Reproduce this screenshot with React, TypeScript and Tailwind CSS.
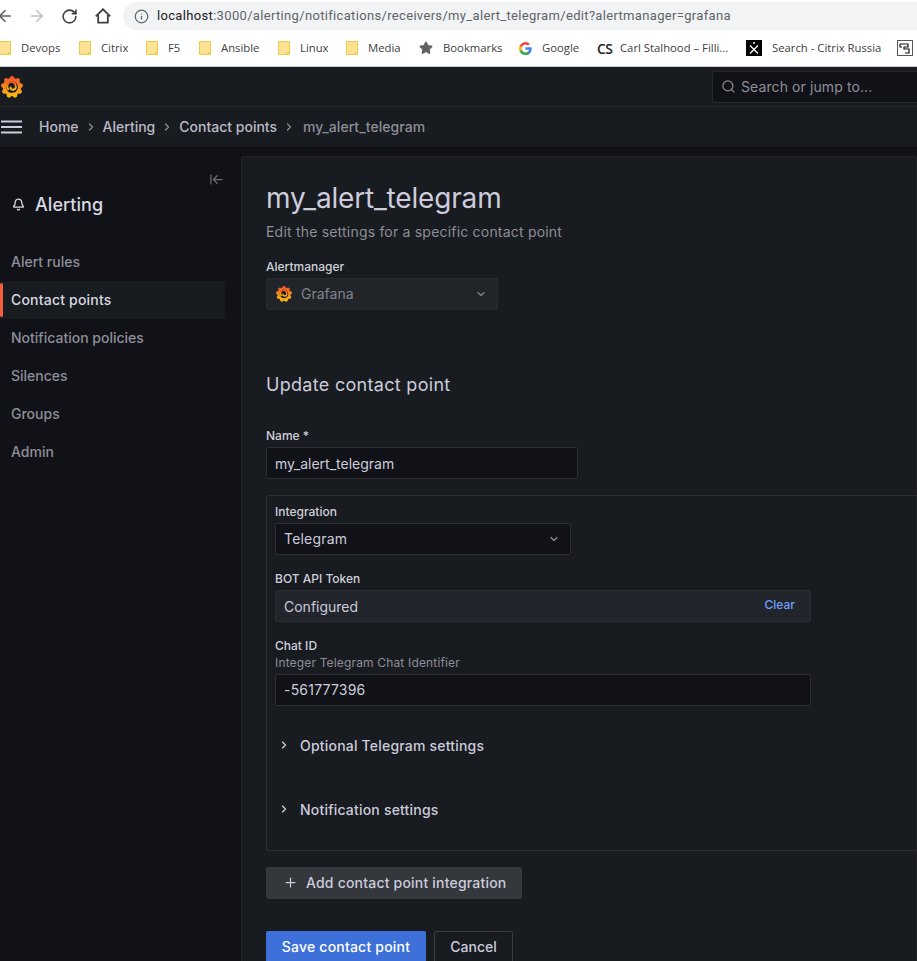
import React from 'react';
import { ArrowLeft, ArrowRight, ArrowLeftToLine, Bell, ChevronDown, ChevronRight, Info, Plus, RotateCw, Search, Star } from 'lucide-react';

const GrafanaLogo: React.FC<{ size: number; id: string }> = ({ size, id }) => {
  const pts: string[] = [];
  const teeth = 9;
  for (let i = 0; i < teeth; i++) {
    const a = (i / teeth) * Math.PI * 2 - Math.PI / 2;
    const step = (Math.PI * 2) / teeth;
    [[9.6, -0.5], [12, -0.14], [12, 0.14], [9.6, 0.5]].forEach(([r, k]) => {
      const t = a + k * step;
      pts.push(`${(12 + r * Math.cos(t)).toFixed(2)},${(12 + r * Math.sin(t)).toFixed(2)}`);
    });
  }
  return (
    <svg width={size} height={size} viewBox="0 0 24 24" className="shrink-0">
      <defs>
        <linearGradient id={id} x1="0" y1="1" x2="0" y2="0">
          <stop offset="0" stopColor="#fcc30f" />
          <stop offset="1" stopColor="#ee4f2a" />
        </linearGradient>
      </defs>
      <polygon points={pts.join(' ')} fill={`url(#${id})`} />
      <circle cx="12" cy="12" r="6.4" fill="#181b1f" />
      <path d="M7.800 14.300a4.800 4.800 0 1 1 8.400-2.300c-.2 2.200-2 3.200-3.600 3-1.500-.2-2.300-1.400-2.200-2.500" fill="none" stroke={`url(#${id})`} strokeWidth="2.300" strokeLinecap="round" />
    </svg>
  );
};

const Folder: React.FC = () => (
  <svg width="12" height="14" viewBox="0 0 12 14" className="shrink-0">
    <path d="M.5.500h11v13H.5z" fill="#fde293" stroke="#f2c94c" />
    <path d="M9 13.500v-2h2.500" fill="none" stroke="#f2c94c" />
  </svg>
);

const GoogleIcon: React.FC = () => (
  <svg width="13" height="13" viewBox="0 0 24 24" className="shrink-0">
    <path fill="#4285F4" d="M23.500 12.300c0-.9-.1-1.700-.2-2.500H12v4.700h6.500a5.600 5.600 0 0 1-2.400 3.600v3h3.900c2.200-2.100 3.500-5.100 3.500-8.800z" />
    <path fill="#34A853" d="M12 24c3.200 0 6-1.100 8-2.900l-3.900-3c-1.100.7-2.500 1.200-4.100 1.200-3.100 0-5.800-2.100-6.700-5H1.300v3.100A12 12 0 0 0 12 24z" />
    <path fill="#FBBC05" d="M5.300 14.300a7.200 7.200 0 0 1 0-4.600V6.600h-4a12 12 0 0 0 0 10.800z" />
    <path fill="#EA4335" d="M12 4.800c1.800 0 3.300.6 4.600 1.800L20 3.200A12 12 0 0 0 1.300 6.600l4 3.100c.9-2.800 3.600-4.900 6.700-4.900z" />
  </svg>
);

const XIcon: React.FC = () => (
  <svg width="16" height="16" viewBox="0 0 16 16" className="shrink-0">
    <rect width="16" height="16" fill="#000" />
    <circle cx="8" cy="3" r="1" fill="#fff" />
    <path d="M4 5.500l8 8M12 5.500l-8 8" stroke="#fff" strokeWidth="1.300" />
  </svg>
);

const QrIcon: React.FC = () => (
  <svg width="16" height="16" viewBox="0 0 16 16" className="shrink-0">
    <rect x=".5" y=".5" width="15" height="15" fill="#fff" stroke="#555" />
    <path d="M3 4h8v3H7v2h5v4H8M3 4v3h2" fill="none" stroke="#111" strokeWidth="1.200" />
  </svg>
);

const HomeIcon: React.FC = () => (
  <svg width="16" height="16" viewBox="0 0 16 16" className="ml-[17px] shrink-0 text-[#3c4043]">
    <path d="M.8 8.300L8 1.300l7.200 7M3.200 7v7.700h9.600V7" fill="none" stroke="currentColor" strokeWidth="1.800" />
  </svg>
);

const bookmarks: { icon: React.ReactNode; label: string; w: string }[] = [
  { icon: <Folder />, label: 'Devops', w: 'w-[80px]' },
  { icon: <Folder />, label: 'Citrix', w: 'w-[67px]' },
  { icon: <Folder />, label: 'F5', w: 'w-[53px]' },
  { icon: <Folder />, label: 'Ansible', w: 'w-[79px]' },
  { icon: <Folder />, label: 'Linux', w: 'w-[68px]' },
  { icon: <Folder />, label: 'Media', w: 'w-[73px]' },
  { icon: <Star size={14} fill="#5f6368" stroke="#5f6368" className="shrink-0" />, label: 'Bookmarks', w: 'w-[100px]' },
  { icon: <GoogleIcon />, label: 'Google', w: 'w-[78px]' },
  { icon: <span className="text-[14px] font-semibold text-[#222] w-[13px] shrink-0 tracking-[-0.5px]">CS</span>, label: 'Carl Stalhood – Filli...', w: 'w-[149px]' },
  { icon: <XIcon />, label: 'Search - Citrix Russia', w: 'w-[151px]' },
];

const ChromeBar: React.FC = () => (
  <div className="h-[67px] bg-white border-b border-[#d0d0d0] overflow-hidden font-['Open_Sans',sans-serif]">
    <div className="h-[34px] flex items-start pt-[2px]">
      <div className="w-[123px] h-[28px] flex items-center shrink-0 text-[#5f6368]">
        <ArrowLeft size={18} strokeWidth={2.3} className="-ml-[4px] shrink-0" />
        <ArrowRight size={18} strokeWidth={2.3} className="ml-[14px] text-[#bdc1c6] shrink-0" />
        <RotateCw size={17} strokeWidth={2.3} className="ml-[15px] shrink-0 text-[#3c4043]" />
        <HomeIcon />
      </div>
      <div className="flex-1 h-[28px] bg-[#f1f3f4] rounded-l-[14px] flex items-center pl-[11px] text-[13px] text-[#5f6368] whitespace-nowrap font-['Roboto',sans-serif] tracking-[0.33px]">
        <Info size={15} className="mr-[8px] shrink-0" />
        <span className="text-[#202124]">localhost</span>:3000/alerting/notifications/receivers/my_alert_telegram/edit?alertmanager=grafana
      </div>
    </div>
    <div className="h-[28px] flex items-center -ml-[1px] text-[11.300px] text-[#3c4043] whitespace-nowrap">
      {bookmarks.map(b => (
        <div key={b.label} className={`flex items-center gap-[10px] shrink-0 ${b.w}`}>
          {b.icon}
          <span>{b.label}</span>
        </div>
      ))}
      <QrIcon />
    </div>
  </div>
);

const TopNav: React.FC = () => (
  <div className="h-[40px] bg-[#181b1f] border-b border-[#25272c] flex items-center justify-between">
    <div className="ml-[1px]"><GrafanaLogo size={22} id="logo-top" /></div>
    <div className="w-[240px] h-[32px] -mr-[35px] mt-[1px] pb-[1px] bg-[#111217] border border-[#25282d] rounded-[2px] flex items-center pl-[8px] gap-[5px] text-[14px] tracking-[0.1px] text-[#8e8e99]">
      <Search size={15} className="shrink-0" />
      <span>Search or jump to...</span>
    </div>
  </div>
);

const Crumb: React.FC<{ label: string }> = ({ label }) => (
  <>
    <span className="text-[#ccccdc] opacity-90">{label}</span>
    <ChevronRight size={12} strokeWidth={2.5} className="text-[#8e8e99] mx-[6px]" />
  </>
);

const BreadcrumbBar: React.FC = () => (
  <div className="h-[41px] pb-[1px] bg-[#181b1f] border-b border-[#0b0c0e] flex items-center text-[14px] font-medium">
    <svg width="21" height="14" viewBox="0 0 21 14" className="ml-[1px] mr-[17px] text-[#ccccdc]">
      <path d="M0 1.500h21M0 7h21M0 12.500h21" stroke="currentColor" strokeWidth="2" />
    </svg>
    <Crumb label="Home" />
    <Crumb label="Alerting" />
    <Crumb label="Contact points" />
    <span className="ml-[2px] text-[#8e8e99] tracking-[0.05px]">my_alert_telegram</span>
  </div>
);

const navItems = ['Alert rules', 'Contact points', 'Notification policies', 'Silences', 'Groups', 'Admin'];

const Sidebar: React.FC = () => (
  <div className="w-[241px] shrink-0 pt-[24px]">
    <div className="flex justify-end pr-[17px] text-[#6b6d75]">
      <ArrowLeftToLine size={15} />
    </div>
    <div className="flex items-center mt-[1px] h-[32px] pl-[12px] text-[#d8d8e4] text-[18px] font-medium tracking-[0.05px]">
      <Bell size={13} strokeWidth={2.4} className="mr-[10px]" />
      Alerting
    </div>
    <div className="mt-[23px] w-[225px]">
      {navItems.map(item => {
        const active = item === 'Contact points';
        return (
          <div
            key={item}
            className={`relative h-[38px] flex items-center pl-[11px] pb-[1px] text-[14px] font-medium ${active ? 'bg-[#181b1f] text-[#d8d8e4] tracking-[0.2px]' : 'text-[#8e8e99]'}`}
          >
            {active && <span className="absolute left-0 top-[2px] bottom-[2px] w-[3px] rounded-[2px] bg-[#f55f3e]" />}
            {item}
          </div>
        );
      })}
    </div>
  </div>
);

const Label: React.FC<{ children: React.ReactNode }> = ({ children }) => (
  <div className="text-[12px] leading-[16px] font-medium text-[#d0d0dc]">{children}</div>
);

const fieldDark = 'h-[32px] bg-[#111217] border border-[#2c2e33] rounded-[2px] flex items-center px-[8px] text-[14px] text-[#ccccdc]';

const Collapsed: React.FC<{ label: string; className: string }> = ({ label, className }) => (
  <div className={`flex items-center text-[14px] font-medium tracking-[0.2px] text-[#ccccdc] ${className}`}>
    <ChevronRight size={12} strokeWidth={2.6} className="ml-[3px] mr-[10px] text-[#ccccdc]" />
    {label}
  </div>
);

const ContactForm: React.FC = () => (
  <div className="flex-1 min-w-0 mt-[8px] bg-[#181b1f] border border-[#202226] rounded-t-[2px] pl-[24px] pt-[21px]">
    <h1 className="text-[28px] leading-[40px] text-[#ccccdc] font-normal tracking-[-0.17px]">my_alert_telegram</h1>
    <p className="mt-[3px] text-[14px] leading-[22px] tracking-[0.2px] text-[#8e8e99]">Edit the settings for a specific contact point</p>

    <div className="mt-[16px]"><Label>Alertmanager</Label></div>
    <div className="mt-[3px] w-[232px] h-[32px] pb-[1px] bg-[#212429] border border-[#292b30] rounded-[2px] flex items-center pl-[9px] pr-[10px] text-[14px] text-[#82838d]">
      <GrafanaLogo size={16} id="logo-am" />
      <span className="ml-[9px] flex-1">Grafana</span>
      <ChevronDown size={12} strokeWidth={2.5} />
    </div>

    <h2 className="mt-[63px] text-[18px] leading-[24px] text-[#ccccdc] font-normal tracking-[0.3px]">Update contact point</h2>

    <div className="mt-[31px]"><Label>Name *</Label></div>
    <div className={`${fieldDark} mt-[3px] w-[312px]`}>my_alert_telegram</div>

    <div className="mt-[16px] w-[700px] h-[356px] border border-[#2c2e33] rounded-[2px] pl-[8px] pt-[8px]">
      <Label>Integration</Label>
      <div className={`${fieldDark} mt-[3px] w-[296px] pb-[1px] justify-between`}>
        <span className="tracking-[0.2px]">Telegram</span>
        <ChevronDown size={12} strokeWidth={2.5} className="mr-[2px] text-[#8e8e99]" />
      </div>
      <div className="mt-[16px]"><Label>BOT API Token</Label></div>
      <div className="mt-[3px] w-[536px] h-[32px] bg-[#22252b] border border-[#2c2e33] rounded-[2px] flex items-center justify-between pl-[8px] pr-[15px] text-[14px] text-[#ccccdc]">
        <span>Configured</span>
        <span className="text-[12px] font-medium text-[#6e9fff] -mt-[2px]">Clear</span>
      </div>
      <div className="mt-[16px]"><Label>Chat ID</Label></div>
      <div className="mt-[1px] text-[12px] leading-[16px] tracking-[0.16px] text-[#8e8e99]">Integer Telegram Chat Identifier</div>
      <div className={`${fieldDark} mt-[3px] w-[536px] pb-[1px] tracking-[0.2px]`}>-561777396</div>
      <Collapsed label="Optional Telegram settings" className="mt-[29px] h-[20px]" />
      <Collapsed label="Notification settings" className="mt-[44px] h-[20px]" />
    </div>

    <button className="mt-[16px] w-[256px] h-[32px] pb-[1px] bg-[#34373c] rounded-[2px] flex items-center pl-[17px] text-[14px] font-medium tracking-[0.2px] text-[#ccccdc]">
      <Plus size={15} className="mr-[8px]" />
      Add contact point integration
    </button>

    <div className="mt-[32px] flex gap-[8px]">
      <button className="w-[160px] h-[32px] pb-[1px] bg-[#3d71d9] rounded-[2px] text-[14px] font-medium tracking-[0.2px] text-white">Save contact point</button>
      <button className="w-[79px] h-[32px] pb-[1px] border border-[#3a3c41] rounded-[2px] text-[14px] font-medium text-[#ccccdc]">Cancel</button>
    </div>
  </div>
);

export default function App() {
  return (
    <div className="w-[917px] h-[961px] overflow-hidden bg-[#111217] font-['Inter',sans-serif]">
      <ChromeBar />
      <TopNav />
      <BreadcrumbBar />
      <div className="flex">
        <Sidebar />
        <ContactForm />
      </div>
    </div>
  );
}
